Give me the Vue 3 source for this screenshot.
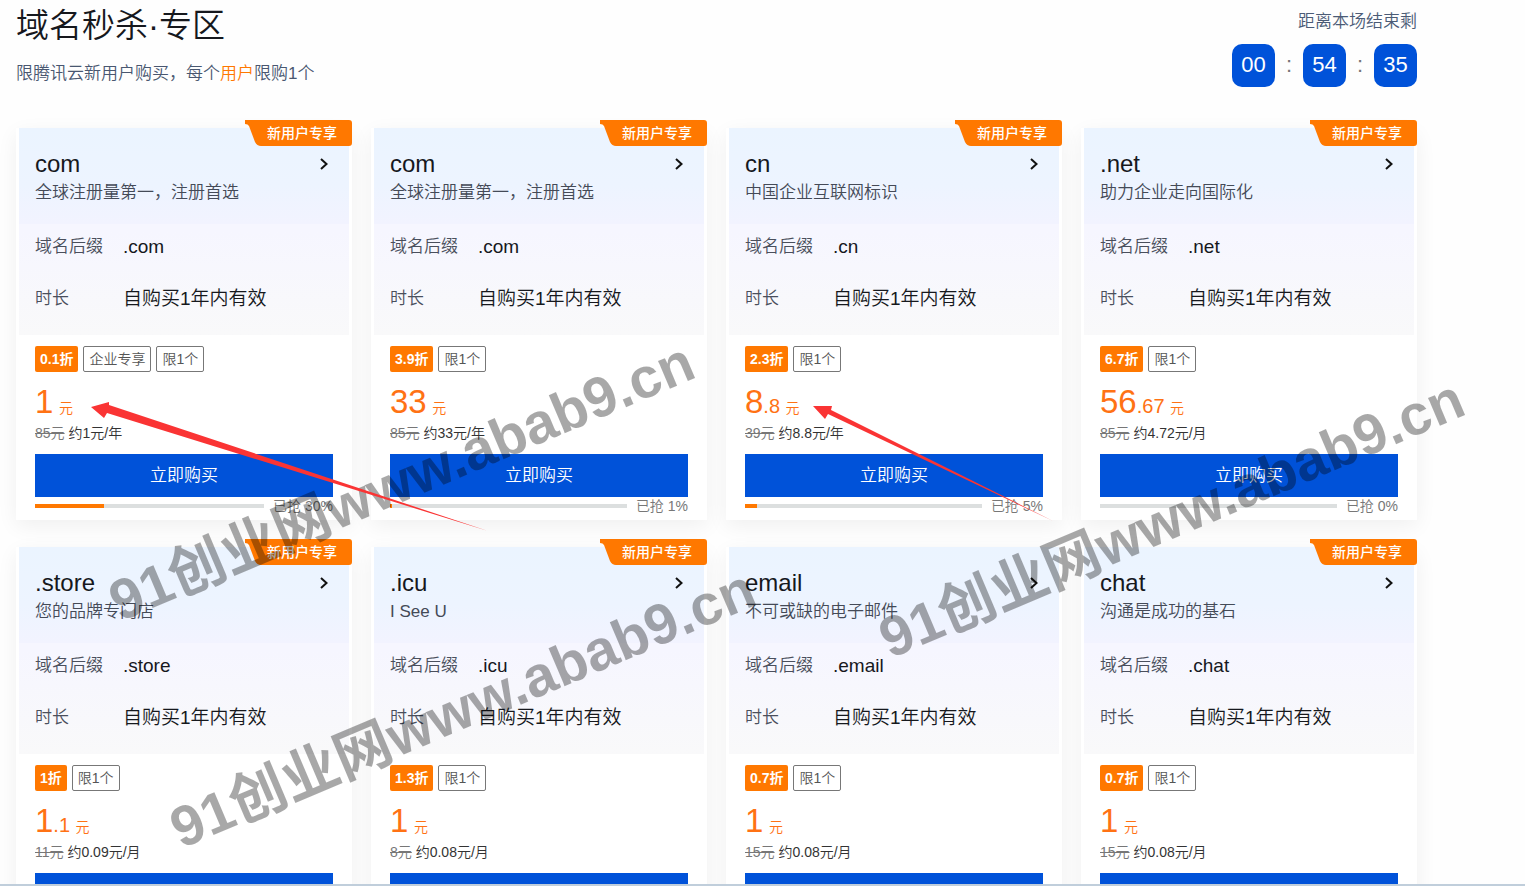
<script setup>
const cards = [
  { name: 'com', desc: '全球注册量第一，注册首选', suffix: '.com', ribbon: true, off: '0.1折', tags: ['企业专享', '限1个'], price: '1', dec: '', old: '85元', avg: '约1元/年', sold: 30 },
  { name: 'com', desc: '全球注册量第一，注册首选', suffix: '.com', ribbon: true, off: '3.9折', tags: ['限1个'], price: '33', dec: '', old: '85元', avg: '约33元/年', sold: 1 },
  { name: 'cn', desc: '中国企业互联网标识', suffix: '.cn', ribbon: true, off: '2.3折', tags: ['限1个'], price: '8', dec: '.8', old: '39元', avg: '约8.8元/年', sold: 5 },
  { name: '.net', desc: '助力企业走向国际化', suffix: '.net', ribbon: true, off: '6.7折', tags: ['限1个'], price: '56', dec: '.67', old: '85元', avg: '约4.72元/月', sold: 0 },
  { name: '.store', desc: '您的品牌专门店', suffix: '.store', ribbon: true, off: '1折', tags: ['限1个'], price: '1', dec: '.1', old: '11元', avg: '约0.09元/月', sold: 0 },
  { name: '.icu', desc: 'I See U', suffix: '.icu', ribbon: true, off: '1.3折', tags: ['限1个'], price: '1', dec: '', old: '8元', avg: '约0.08元/月', sold: 0 },
  { name: 'email', desc: '不可或缺的电子邮件', suffix: '.email', ribbon: false, off: '0.7折', tags: ['限1个'], price: '1', dec: '', old: '15元', avg: '约0.08元/月', sold: 0 },
  { name: 'chat', desc: '沟通是成功的基石', suffix: '.chat', ribbon: true, off: '0.7折', tags: ['限1个'], price: '1', dec: '', old: '15元', avg: '约0.08元/月', sold: 0 },
]
const marks = [
  { x: 120, y: 622 },
  { x: 181, y: 849 },
  { x: 890, y: 659 },
]
</script>

<template>
  <div class="page">
    <header class="head">
      <div>
        <h1>域名秒杀·专区</h1>
        <p class="sub">限腾讯云新用户购买，每个<em>用户</em>限购1个</p>
      </div>
      <div class="timer">
        <p>距离本场结束剩</p>
        <div class="clock"><b>00</b><i>:</i><b>54</b><i>:</i><b>35</b></div>
      </div>
    </header>

    <main class="grid">
      <article v-for="(c, i) in cards" :key="i" class="card">
        <div v-if="c.ribbon" class="ribbon">
          <svg class="ribbon-bg" viewBox="0 0 107 26" preserveAspectRatio="none" aria-hidden="true">
            <path d="M0 0H104Q107 0 107 3V23Q107 26 104 26H16Q12 26 10 22L4 6Q3 4 0 4Z" fill="#ff7800" />
          </svg>
          <span>新用户专享</span>
        </div>
        <div class="top">
          <div class="intro">
            <a href="#" class="name">
              <span>{{ c.name }}</span>
              <svg width="10" height="14" viewBox="0 0 10 14" aria-hidden="true"><path d="M2 2L7.500 7L2 12" fill="none" stroke="#111" stroke-width="2" /></svg>
            </a>
            <p class="desc">{{ c.desc }}</p>
          </div>
          <dl class="specs">
            <div><dt>域名后缀</dt><dd>{{ c.suffix }}</dd></div>
            <div><dt>时长</dt><dd>自购买1年内有效</dd></div>
          </dl>
        </div>
        <div class="bottom">
          <div class="tags">
            <span class="off">{{ c.off }}</span>
            <span v-for="t in c.tags" :key="t" class="tag">{{ t }}</span>
          </div>
          <div class="price"><strong>{{ c.price }}</strong><span class="dec">{{ c.dec }}</span> <span class="unit">元</span></div>
          <p class="avg"><del>{{ c.old }}</del> {{ c.avg }}</p>
          <button type="button" class="buy">立即购买</button>
          <div class="progress">
            <div class="track"><div class="fill" :style="{ width: c.sold + '%' }"></div></div>
            <span>已抢 {{ c.sold }}%</span>
          </div>
        </div>
      </article>
    </main>

    <svg class="overlay" width="1525" height="886" viewBox="0 0 1525 886" aria-hidden="true">
      <text v-for="(m, i) in marks" :key="i" class="mark" :transform="`translate(${m.x} ${m.y}) rotate(-23)`">91创业网www.abab9.cn</text>
      <path d="M91 407L109 402L109 405L488 531L107 413L104 418Z" fill="#fa3434" />
      <path d="M813 406L832 406L831 410L1053 521L828 414L825 419Z" fill="#fa3434" />
    </svg>
    <div class="edge"></div>
  </div>
</template>

<style>
body {
  margin: 0;
}
</style>

<style scoped>
.page {
  position: relative;
  box-sizing: border-box;
  height: 100vh;
  overflow: hidden;
  padding: 0 108px 0 16px;
  background: #fefefe;
  color: #16181d;
  font-family: "Liberation Sans", "Noto Sans CJK SC", sans-serif;
  font-weight: 350;
}
h1, p, dl, dd, dt {
  margin: 0;
}
.head {
  display: flex;
  justify-content: space-between;
  height: 128px;
}
h1 {
  padding-top: 2px;
  font-size: 33px;
  line-height: 48px;
  font-weight: 350;
}
.sub {
  padding-top: 12px;
  font-size: 17px;
  line-height: 24px;
  color: #495770;
}
.sub em {
  font-style: normal;
  color: #ff7800;
}
.timer {
  display: flex;
  flex-direction: column;
  align-items: flex-end;
  padding-top: 10px;
  font-size: 17px;
  line-height: 24px;
  color: #4b5b76;
}
.clock {
  display: flex;
  padding-top: 10px;
  line-height: 42px;
}
.clock b {
  width: 43px;
  height: 43px;
  border-radius: 10px;
  background: #0052d9;
  color: #fff;
  font-size: 22px;
  font-weight: 400;
  text-align: center;
}
.clock i {
  width: 28px;
  font-size: 22px;
  font-style: normal;
  text-align: center;
  color: #777;
}
.grid {
  display: grid;
  grid-template-columns: repeat(4, 1fr);
  gap: 27px 19px;
}
.card {
  position: relative;
  height: 392px;
  background: #fff;
  box-shadow: 0 6px 20px rgba(0, 0, 0, 0.06);
}
.ribbon {
  position: absolute;
  top: -8px;
  right: 0;
  width: 107px;
  height: 26px;
  color: #fff;
  font-size: 14px;
  font-weight: 500;
  line-height: 26px;
}
.ribbon-bg {
  position: absolute;
  width: 100%;
  height: 100%;
}
.ribbon span {
  position: relative;
  padding-left: 22px;
}
.top {
  margin: 0 3px;
  background: linear-gradient(#f6f6ff, #f6f6ff 50%, #f9f9fa);
}
.intro {
  height: 96px;
  box-sizing: border-box;
  padding: 21px 16px 0;
  background: linear-gradient(#ebf4ff, #edf4ff 60%, #f2f3ff);
}
.name {
  display: flex;
  justify-content: space-between;
  align-items: center;
  padding-right: 4px;
  color: #16181d;
  font-size: 24px;
  line-height: 30px;
  text-decoration: none;
}
.desc {
  font-size: 17px;
  line-height: 28px;
  color: #444a57;
}
.specs {
  padding: 10px 16px 23px;
}
.specs div {
  display: flex;
  height: 26px;
  line-height: 26px;
}
.specs div + div {
  margin-top: 26px;
}
.specs dt {
  width: 88px;
  font-size: 17px;
  color: #4a4f5c;
}
.specs dd {
  font-size: 19px;
}
.bottom {
  padding: 11px 19px 0;
}
.tags {
  display: flex;
  gap: 5px;
  height: 26px;
  font-size: 14px;
  line-height: 24px;
}
.off {
  padding: 1px 5px;
  border-radius: 2px;
  background: #ff7800;
  color: #fff;
  font-weight: 700;
}
.tag {
  padding: 0 5px;
  border: 1px solid #777;
  border-radius: 2px;
  color: #555;
}
.price {
  height: 49px;
  line-height: 60px;
  color: #ff7214;
  white-space: nowrap;
  font-size: 20px;
}
.price strong {
  font-size: 33px;
  font-weight: 400;
}
.unit {
  font-size: 14px;
}
.avg {
  font-size: 14px;
  line-height: 24px;
  color: #333;
}
.avg del {
  color: #777;
}
.buy {
  display: block;
  width: 100%;
  height: 43px;
  margin-top: 9px;
  padding: 0 0 4px;
  border: 0;
  background: #0052d9;
  color: #fff;
  font: inherit;
  font-size: 17px;
}
.progress {
  display: flex;
  align-items: center;
  gap: 9px;
  height: 18px;
  font-size: 14px;
  line-height: 18px;
  color: #777;
}
.track {
  flex: 1;
  height: 4px;
  background: #dcdfdf;
}
.fill {
  height: 100%;
  background: #ff7800;
}
.overlay {
  position: absolute;
  top: 0;
  left: 0;
  pointer-events: none;
}
.mark {
  fill: rgba(0, 0, 0, 0.34);
  font-size: 57px;
  font-weight: 700;
}
.edge {
  position: absolute;
  right: 0;
  bottom: 0;
  left: 0;
  height: 2px;
  background: #c0cedb;
}
</style>
